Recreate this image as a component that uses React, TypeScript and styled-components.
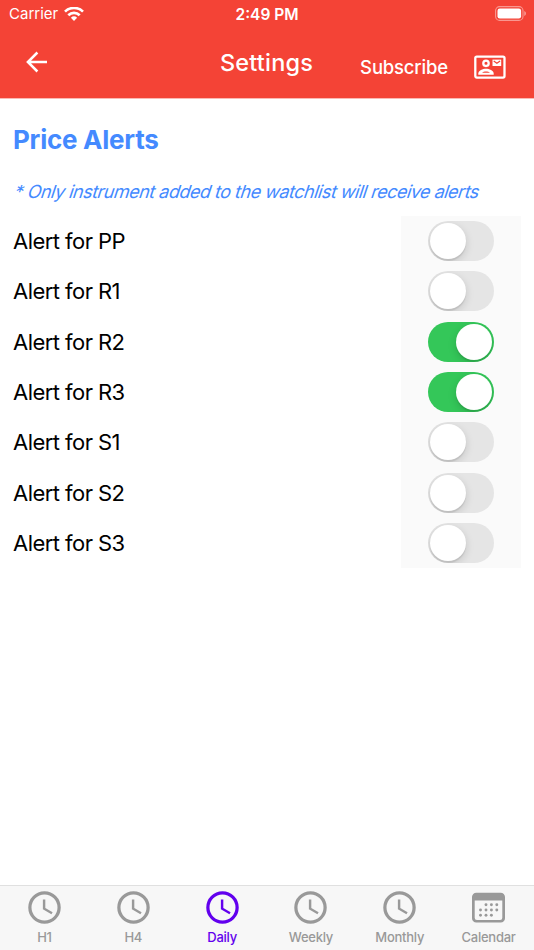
import React, { useState } from "react";
import styled, { createGlobalStyle } from "styled-components";

const GlobalStyle = createGlobalStyle`
  * { box-sizing: border-box; }
  body { margin: 0; background: #fff; }
  button { appearance: none; border: 0; margin: 0; padding: 0; background: none; color: inherit; font: inherit; letter-spacing: inherit; cursor: pointer; }
  svg { display: block; flex: none; }
`;

const Screen = styled.div`
  width: 534px;
  height: 950px;
  display: flex;
  flex-direction: column;
  background: #fff;
  overflow: hidden;
  font-family: Inter, "Liberation Sans", sans-serif;
`;

const Header = styled.header`
  height: 99px;
  flex: none;
  background: #f44336;
  border-bottom: 1px solid #fbb9b4;
  color: #fff;
`;

const StatusBar = styled.div`
  height: 27px;
  display: grid;
  grid-template-columns: 1fr auto 1fr;
  align-items: center;
  padding: 0 8px 0 9px;
`;

const Carrier = styled.div`
  display: flex;
  align-items: center;
  gap: 6px;
  font-size: 15px;
  line-height: 20px;
  letter-spacing: 0;
  padding-top: 1px;
`;

const Clock = styled.div`
  font-size: 15.5px;
  font-weight: 600;
  line-height: 20px;
  letter-spacing: 0;
  padding: 2px 1px 0 0;
`;

const Battery = styled.div`
  justify-self: end;
`;

const NavBar = styled.div`
  height: 70px;
  display: grid;
  grid-template-columns: 1fr auto 1fr;
  align-items: center;
  padding: 0 28px 0 26px;
`;

const BackButton = styled.button`
  justify-self: start;
`;

const Title = styled.h1`
  margin: 0;
  padding: 1px 0 0 1px;
  font-size: 23.5px;
  font-weight: 500;
  line-height: 30px;
  letter-spacing: 0.2px;
`;

const Actions = styled.div`
  justify-self: end;
  display: flex;
  align-items: center;
  gap: 26px;
  padding-top: 10px;
  font-size: 18.5px;
  font-weight: 500;
  line-height: 24px;
  letter-spacing: -0.18px;
`;

const Content = styled.main`
  flex: 1;
  padding: 22px 13px 0;
`;

const SectionTitle = styled.h2`
  margin: 0;
  font-size: 26px;
  font-weight: 700;
  line-height: 37px;
  letter-spacing: -0.25px;
  color: #448aff;
`;

const Note = styled.p`
  margin: 22px 0 12px;
  padding-left: 2px;
  font-size: 18px;
  line-height: 24px;
  letter-spacing: -0.5px;
  white-space: nowrap;
  color: #448aff;
  transform: skewX(-18deg);
`;

const Row = styled.div`
  height: 50.3px;
  display: flex;
  align-items: center;
  justify-content: space-between;
`;

const RowLabel = styled.span`
  font-size: 22px;
  line-height: 28px;
  letter-spacing: -0.55px;
  color: #000;
`;

const SwitchCell = styled.div`
  width: 120.5px;
  height: 100%;
  display: flex;
  align-items: center;
  justify-content: center;
  background: #fafafa;
`;

const Track = styled.button<{ $on: boolean }>`
  width: 66px;
  height: 40px;
  display: flex;
  align-items: center;
  justify-content: ${(p) => (p.$on ? "flex-end" : "flex-start")};
  padding: 2px;
  border-radius: 20px;
  overflow: hidden;
  background: ${(p) => (p.$on ? "#34c759" : "#e5e5e5")};
`;

const Thumb = styled.span`
  width: 36px;
  height: 36px;
  border-radius: 50%;
  background: #fff;
  box-shadow: 0 3px 9px rgba(0, 0, 0, 0.15), 0 2px 1px rgba(0, 0, 0, 0.08);
`;

const TabBar = styled.nav`
  height: 65px;
  flex: none;
  display: grid;
  grid-template-columns: repeat(6, 1fr);
  padding-right: 1px;
  border-top: 1px solid #e0e0e0;
  background: #f7f7f7;
`;

const Tab = styled.button<{ $active: boolean }>`
  display: flex;
  flex-direction: column;
  align-items: center;
  padding-top: 2px;
  color: ${(p) => (p.$active ? "#6200ee" : "#999")};
`;

const TabLabel = styled.span`
  margin-top: 2px;
  font-size: 13px;
  font-weight: 500;
  line-height: 16px;
  letter-spacing: -0.25px;
`;

const WifiIcon = () => (
  <svg width="20" height="15" viewBox="0 0 20 15" fill="none" stroke="#fff" strokeWidth="2.7">
    <path d="M1 4.600a13 13 0 0 1 18 0" />
    <path d="M4.300 8.200a8.200 8.200 0 0 1 11.400 0" />
    <path d="M10 13.900 6.900 10.800a4.500 4.500 0 0 1 6.200 0z" fill="#fff" stroke="none" />
  </svg>
);

const BatteryIcon = () => (
  <svg width="31" height="15" viewBox="0 0 31 15">
    <rect x="0.6" y="0.6" width="27.4" height="13.8" rx="4" fill="none" stroke="#fff" strokeOpacity=".45" strokeWidth="1.1" />
    <rect x="2.5" y="2.5" width="23.6" height="10" rx="2.3" fill="#fff" />
    <path d="M29.300 5v5c1-.4 1.600-1.400 1.600-2.500S30.300 5.400 29.300 5z" fill="#fff" fillOpacity=".5" />
  </svg>
);

const BackIcon = () => (
  <svg width="22" height="22" viewBox="0 0 22 22" fill="none" stroke="#fff" strokeWidth="2.5">
    <path d="M21 11H2M11.400 1.500 1.900 11l9.500 9.500" />
  </svg>
);

const ContactMailIcon = () => (
  <svg width="32" height="24" viewBox="0 0 32 24" fill="none">
    <rect x="1.300" y="1.600" width="29.200" height="21" rx="1.500" stroke="#fff" strokeWidth="2.300" />
    <circle cx="12" cy="8.300" r="2.700" stroke="#fff" strokeWidth="2.300" />
    <path d="M4.300 19.700v-1.300c0-3 4.500-4.700 7.700-4.700s7.700 1.700 7.700 4.700v1.300z" fill="#fff" />
    <path d="M8 17.700c1.800-1.500 6.200-1.500 8 0z" fill="#f44336" />
    <rect x="18.500" y="4.600" width="8.700" height="6.400" fill="#fff" />
    <path d="m19.700 6 3.200 2.200L26.100 6" stroke="#f44336" strokeWidth="1.200" />
  </svg>
);

const ClockIcon = () => (
  <svg width="39" height="39" viewBox="0 0 24 24" fill="currentColor">
    <path d="M12 2a10 10 0 1 0 0 20 10 10 0 0 0 0-20zm0 18a8 8 0 1 1 0-16 8 8 0 0 1 0 16z" />
    <path d="M12.500 7H11v6l5.250 3.150.75-1.230-4.500-2.670z" />
  </svg>
);

const DOTS: [number, number][] = [
  [17, 16.7], [22.4, 16.7], [27.8, 16.7],
  [11.5, 22], [17, 22], [22.4, 22], [27.8, 22],
  [11.5, 27.3], [17, 27.3], [22.4, 27.3],
];

const CalendarIcon = () => (
  <svg width="39" height="39" viewBox="0 0 39 39" fill="currentColor">
    <path
      fillRule="evenodd"
      d="M7.300 4.700h24.400a4.300 4.300 0 0 1 4.300 4.300v21.200a4.300 4.300 0 0 1-4.300 4.300H7.300a4.300 4.300 0 0 1-4.300-4.300V9a4.300 4.300 0 0 1 4.300-4.300zM5.700 12.400v17.300a2.200 2.200 0 0 0 2.200 2.200h23.200a2.200 2.200 0 0 0 2.200-2.200V12.400z"
    />
    {DOTS.map(([x, y]) => (
      <circle key={`${x}-${y}`} cx={x} cy={y} r="1.450" />
    ))}
  </svg>
);

const ALERTS = ["PP", "R1", "R2", "R3", "S1", "S2", "S3"];
const TABS = ["H1", "H4", "Daily", "Weekly", "Monthly", "Calendar"];

export default function App() {
  const [enabled, setEnabled] = useState<string[]>(["R2", "R3"]);
  const [tab, setTab] = useState("Daily");

  const toggle = (name: string) =>
    setEnabled((list) => (list.includes(name) ? list.filter((n) => n !== name) : [...list, name]));

  return (
    <>
      <GlobalStyle />
      <Screen>
        <Header>
          <StatusBar>
            <Carrier>
              <span>Carrier</span>
              <WifiIcon />
            </Carrier>
            <Clock>2:49 PM</Clock>
            <Battery>
              <BatteryIcon />
            </Battery>
          </StatusBar>
          <NavBar>
            <BackButton aria-label="Back">
              <BackIcon />
            </BackButton>
            <Title>Settings</Title>
            <Actions>
              <button>Subscribe</button>
              <button aria-label="Contact">
                <ContactMailIcon />
              </button>
            </Actions>
          </NavBar>
        </Header>
        <Content>
          <SectionTitle>Price Alerts</SectionTitle>
          <Note>* Only instrument added to the watchlist will receive alerts</Note>
          {ALERTS.map((name) => {
            const on = enabled.includes(name);
            return (
              <Row key={name}>
                <RowLabel>Alert for {name}</RowLabel>
                <SwitchCell>
                  <Track $on={on} role="switch" aria-checked={on} aria-label={name} onClick={() => toggle(name)}>
                    <Thumb />
                  </Track>
                </SwitchCell>
              </Row>
            );
          })}
        </Content>
        <TabBar>
          {TABS.map((name) => (
            <Tab key={name} $active={name === tab} onClick={() => setTab(name)}>
              {name === "Calendar" ? <CalendarIcon /> : <ClockIcon />}
              <TabLabel>{name}</TabLabel>
            </Tab>
          ))}
        </TabBar>
      </Screen>
    </>
  );
}
